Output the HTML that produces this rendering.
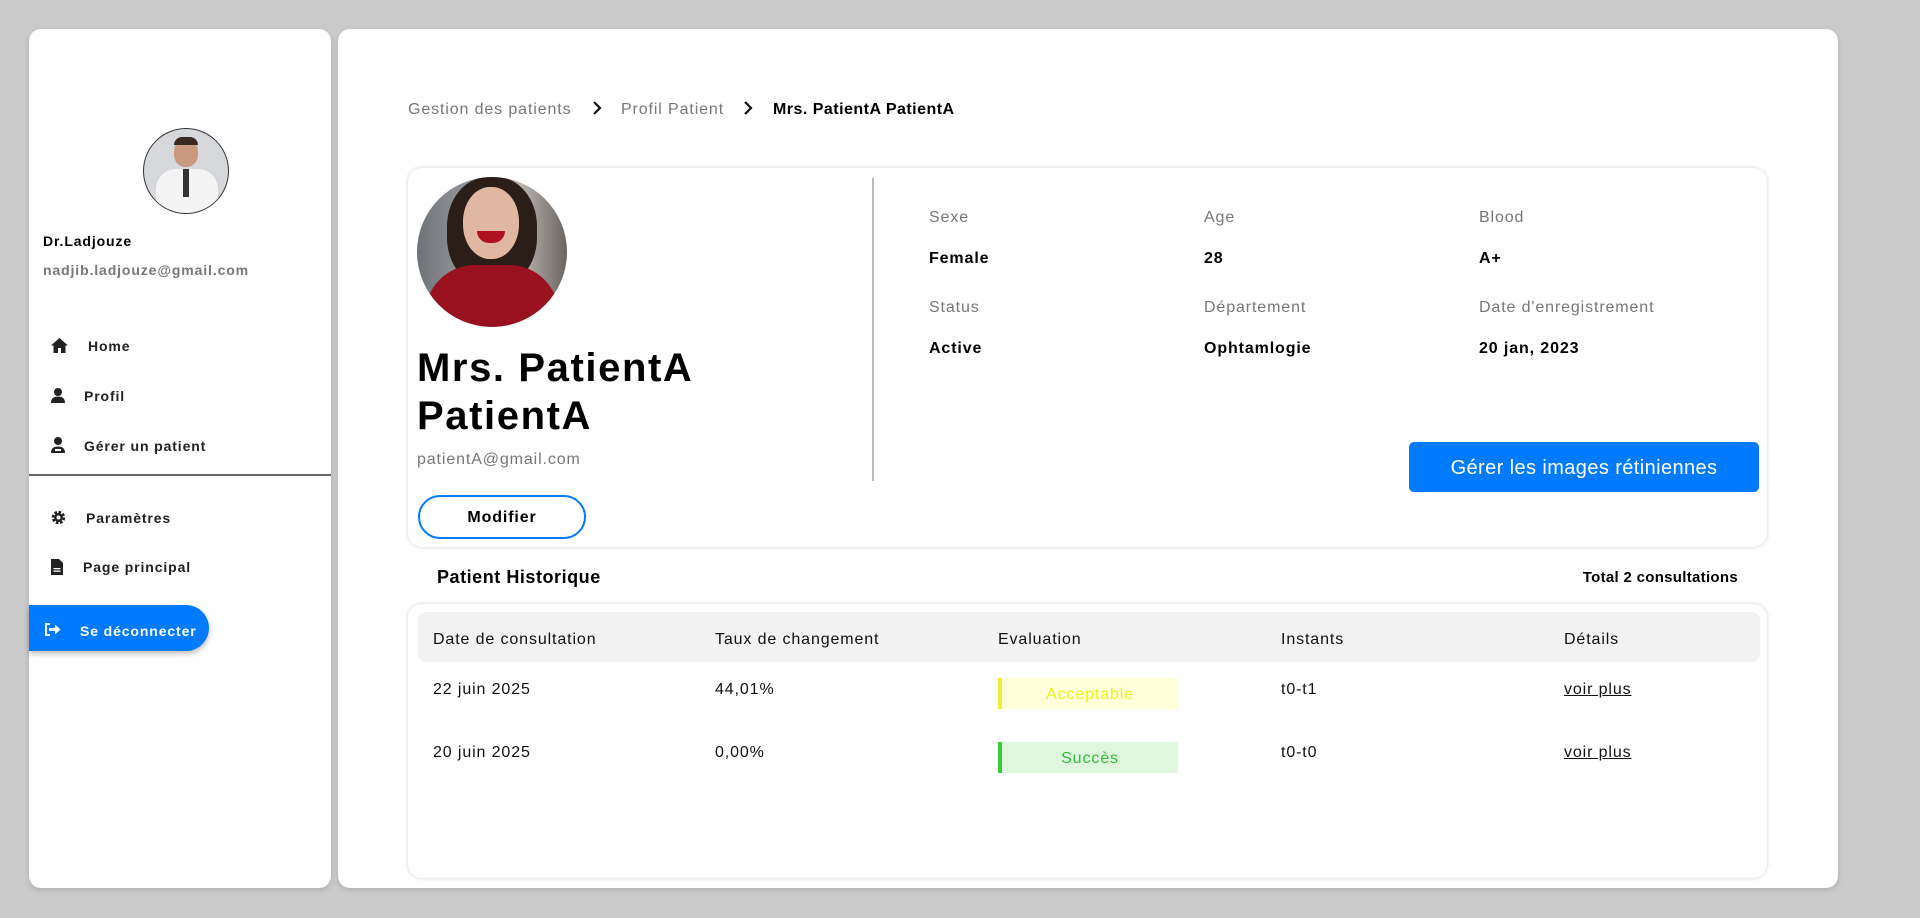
<!DOCTYPE html>
<html><head><meta charset="utf-8"><style>
*{box-sizing:border-box;margin:0;padding:0}
body{width:1920px;height:918px;background:#cbcbcb;font-family:"Liberation Sans",sans-serif;color:#000;position:relative;overflow:hidden;letter-spacing:0.055em}
.abs{position:absolute}
.t{margin-top:2px}
.side{left:29px;top:29px;width:302px;height:859px;background:#fff;border-radius:12px;box-shadow:0 2px 6px rgba(0,0,0,.15)}
.main{left:338px;top:29px;width:1500px;height:859px;background:#fff;border-radius:12px;box-shadow:0 2px 6px rgba(0,0,0,.15)}
.nav{position:absolute;font-size:14px;font-weight:bold;color:#222;margin-top:1px}
.card{position:absolute;background:#fff;border-radius:14px;box-shadow:0 0 4px rgba(0,0,0,.18)}
.lbl{position:absolute;font-size:16px;color:#777;margin-top:2px}
.val{position:absolute;font-size:16px;font-weight:bold;color:#000;margin-top:2px}
.th{position:absolute;font-size:16px;color:#111;top:631px}
.td{position:absolute;font-size:16px;color:#111;margin-top:1px}
</style></head><body>
<div class="abs side"></div>
<div class="abs main"></div>

<!-- doctor avatar -->
<div class="abs" style="left:143px;top:128px;width:86px;height:86px;border-radius:50%;border:1px solid #333;overflow:hidden;background:#d6d8dc">
<div class="abs" style="left:30px;top:10px;width:24px;height:28px;border-radius:45%;background:#c99a80"></div>
<div class="abs" style="left:30px;top:8px;width:24px;height:8px;border-radius:8px 8px 0 0;background:#3a2a22"></div>
<div class="abs" style="left:12px;top:40px;width:62px;height:50px;border-radius:20px 20px 0 0;background:#f4f4f4"></div>
<div class="abs" style="left:39px;top:40px;width:6px;height:28px;background:#333"></div>
</div>
<div class="abs t" style="left:43px;top:231px;font-size:14px;font-weight:bold">Dr.Ladjouze</div>
<div class="abs t" style="left:43px;top:260px;font-size:14px;color:#777;font-weight:bold">nadjib.ladjouze@gmail.com</div>

<svg class="abs" style="left:51px;top:338px" width="17" height="15" viewBox="0 0 17 15"><path d="M8.5 0L0 7.5h2.5V15h4.5v-5h3v5h4.5V7.5H17z" fill="#222"/></svg>
<div class="nav" style="left:88px;top:337px">Home</div>
<svg class="abs" style="left:51px;top:388px" width="14" height="15" viewBox="0 0 14 15"><circle cx="7" cy="4" r="4" fill="#222"/><path d="M0 15c0-5 3-6.5 7-6.5s7 1.5 7 6.5z" fill="#222"/></svg>
<div class="nav" style="left:84px;top:387px">Profil</div>
<svg class="abs" style="left:51px;top:437px" width="14" height="16" viewBox="0 0 14 16"><circle cx="7" cy="4" r="4" fill="#222"/><path d="M0 16c0-5 3-6.5 7-6.5s7 1.5 7 6.5z" fill="#222"/><rect x="4" y="12" width="6" height="2" fill="#fff"/></svg>
<div class="nav" style="left:84px;top:437px">Gérer un patient</div>
<div class="abs" style="left:29px;top:474px;width:302px;height:2px;background:#666"></div>
<svg class="abs" style="left:51px;top:510px" width="15" height="15" viewBox="0 0 15 15"><circle cx="7.5" cy="7.5" r="5" fill="none" stroke="#222" stroke-width="3.5" stroke-dasharray="2.5 1.4"/><circle cx="7.5" cy="7.5" r="4.5" fill="#222"/><circle cx="7.5" cy="7.5" r="2" fill="#fff"/></svg>
<div class="nav" style="left:86px;top:509px">Paramètres</div>
<svg class="abs" style="left:51px;top:559px" width="12" height="16" viewBox="0 0 12 16"><path d="M0 0h8l4 4v12H0z" fill="#222"/><rect x="2.5" y="9" width="7" height="1.3" fill="#fff"/><rect x="2.5" y="11.5" width="7" height="1.3" fill="#fff"/></svg>
<div class="nav" style="left:83px;top:558px">Page principal</div>

<div class="abs" style="left:29px;top:605px;width:180px;height:46px;background:#007bff;border-radius:0 23px 23px 0;box-shadow:0 3px 6px rgba(0,0,0,.25)"></div>
<svg class="abs" style="left:45px;top:623px" width="16" height="13" viewBox="0 0 16 13"><path d="M5 1H1v11h4" fill="none" stroke="#fff" stroke-width="2"/><path d="M4 5h6V1.5l5.5 5-5.5 5V8H4z" fill="#fff"/></svg>
<div class="abs" style="left:80px;top:623px;font-size:14px;font-weight:bold;color:#fff">Se déconnecter</div>

<!-- breadcrumb -->
<div class="abs t" style="left:408px;top:99px;font-size:16px;color:#777">Gestion des patients</div>
<svg class="abs" style="left:592px;top:101px" width="10" height="14" viewBox="0 0 10 14"><path d="M2 1l6 6-6 6" fill="none" stroke="#111" stroke-width="2.2"/></svg>
<div class="abs t" style="left:621px;top:99px;font-size:16px;color:#777">Profil Patient</div>
<svg class="abs" style="left:743px;top:101px" width="10" height="14" viewBox="0 0 10 14"><path d="M2 1l6 6-6 6" fill="none" stroke="#111" stroke-width="2.2"/></svg>
<div class="abs t" style="left:773px;top:99px;font-size:16px;font-weight:bold;letter-spacing:0.03em">Mrs. PatientA PatientA</div>

<!-- profile card -->
<div class="card" style="left:408px;top:168px;width:1359px;height:379px"></div>
<div class="abs" style="left:417px;top:177px;width:150px;height:150px;border-radius:50%;overflow:hidden;background:linear-gradient(90deg,#6f7378,#9a9ea2 40%,#b7b2ad 70%,#6a6560)">
<div class="abs" style="left:30px;top:0;width:90px;height:110px;border-radius:45%;background:#2b1d17"></div>
<div class="abs" style="left:46px;top:10px;width:56px;height:72px;border-radius:48%;background:#e0b7a0"></div>
<div class="abs" style="left:60px;top:54px;width:28px;height:12px;border-radius:0 0 14px 14px;background:#b01020"></div>
<div class="abs" style="left:8px;top:88px;width:134px;height:80px;border-radius:50px 50px 0 0;background:#99101f"></div>
</div>
<div class="abs" style="left:417px;top:344px;font-size:40px;font-weight:bold;line-height:48px;letter-spacing:0.04em">Mrs. PatientA<br>PatientA</div>
<div class="abs t" style="left:417px;top:449px;font-size:16px;color:#777">patientA@gmail.com</div>
<div class="abs" style="left:418px;top:495px;width:168px;height:44px;border:2px solid #007bff;border-radius:22px;text-align:center;line-height:42px;font-size:16px;font-weight:bold">Modifier</div>
<div class="abs" style="left:872px;top:178px;width:2px;height:303px;background:#bbb"></div>

<div class="lbl" style="left:929px;top:207px">Sexe</div><div class="val" style="left:929px;top:248px">Female</div>
<div class="lbl" style="left:1204px;top:207px">Age</div><div class="val" style="left:1204px;top:248px">28</div>
<div class="lbl" style="left:1479px;top:207px">Blood</div><div class="val" style="left:1479px;top:248px">A+</div>
<div class="lbl" style="left:929px;top:297px">Status</div><div class="val" style="left:929px;top:338px">Active</div>
<div class="lbl" style="left:1204px;top:297px">Département</div><div class="val" style="left:1204px;top:338px">Ophtamlogie</div>
<div class="lbl" style="left:1479px;top:297px">Date d'enregistrement</div><div class="val" style="left:1479px;top:338px">20 jan, 2023</div>

<div class="abs" style="left:1409px;top:442px;width:350px;height:50px;background:#007bff;border-radius:5px;color:#fff;font-size:20px;text-align:center;line-height:52px;letter-spacing:0.02em">Gérer les images rétiniennes</div>

<div class="abs t" style="left:437px;top:565px;font-size:18px;font-weight:bold;letter-spacing:0.03em">Patient Historique</div>
<div class="abs t" style="left:1538px;top:567px;width:200px;text-align:right;font-size:15px;font-weight:bold;letter-spacing:0.02em">Total 2 consultations</div>

<div class="card" style="left:408px;top:604px;width:1359px;height:274px"></div>
<div class="abs" style="left:418px;top:612px;width:1342px;height:50px;background:#f2f2f2;border-radius:8px"></div>
<div class="th" style="left:433px">Date de consultation</div>
<div class="th" style="left:715px">Taux de changement</div>
<div class="th" style="left:998px">Evaluation</div>
<div class="th" style="left:1281px">Instants</div>
<div class="th" style="left:1564px">Détails</div>

<div class="td" style="left:433px;top:680px">22 juin 2025</div>
<div class="td" style="left:715px;top:680px">44,01%</div>
<div class="abs" style="left:998px;top:678px;width:180px;height:31px;background:#ffffd9;border-left:4px solid #f0f030;color:#f0f020;font-size:16px;text-align:center;line-height:33px">Acceptable</div>
<div class="td" style="left:1281px;top:680px">t0-t1</div>
<div class="td" style="left:1564px;top:680px;text-decoration:underline">voir plus</div>

<div class="td" style="left:433px;top:743px">20 juin 2025</div>
<div class="td" style="left:715px;top:743px">0,00%</div>
<div class="abs" style="left:998px;top:742px;width:180px;height:31px;background:#dff7df;border-left:4px solid #33cc33;color:#33bb33;font-size:16px;text-align:center;line-height:33px">Succès</div>
<div class="td" style="left:1281px;top:743px">t0-t0</div>
<div class="td" style="left:1564px;top:743px;text-decoration:underline">voir plus</div>
</body></html>
